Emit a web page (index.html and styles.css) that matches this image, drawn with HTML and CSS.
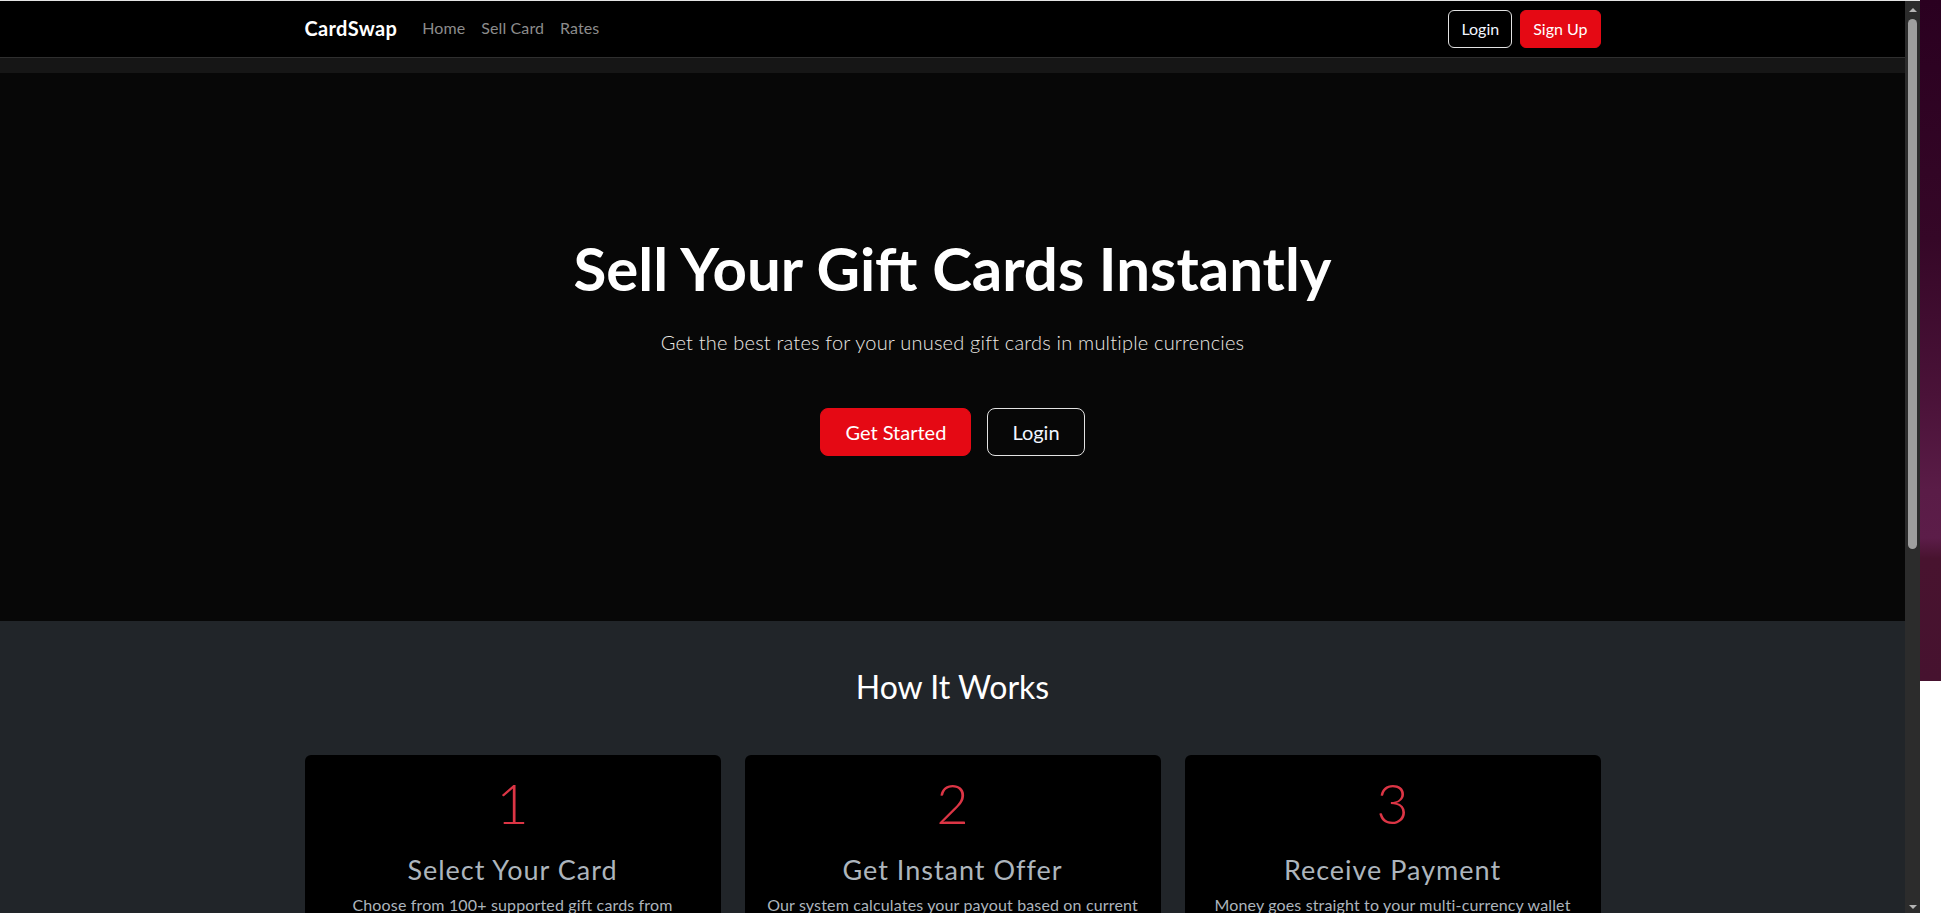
FILE: index.html
```html
<!DOCTYPE html>
<html lang="en">
<head>
<meta charset="utf-8">
<title>CardSwap - Sell Your Gift Cards Instantly</title>
<link rel="stylesheet" href="styles.css">
</head>
<body>
<div class="screen">
  <div class="window">
    <div class="page">
      <nav class="navbar">
        <div class="container nav-inner">
          <a class="brand" href="#">CardSwap</a>
          <ul class="nav-links">
            <li><a href="#">Home</a></li>
            <li><a href="#">Sell Card</a></li>
            <li><a href="#">Rates</a></li>
          </ul>
          <div class="nav-actions">
            <a class="btn btn-outline" href="#">Login</a>
            <a class="btn btn-red" href="#">Sign Up</a>
          </div>
        </div>
      </nav>
      <div class="nav-gap"></div>
      <header class="hero">
        <h1 class="hero-title">Sell Your Gift Cards Instantly</h1>
        <p class="hero-lead">Get the best rates for your unused gift cards in multiple currencies</p>
        <div class="hero-actions">
          <a class="btn btn-lg btn-red" href="#">Get Started</a>
          <a class="btn btn-lg btn-outline" href="#">Login</a>
        </div>
      </header>
      <section class="how">
        <h2 class="how-title">How It Works</h2>
        <div class="container steps">
          <div class="step-card">
            <div class="step-num">1</div>
            <h3 class="step-title">Select Your Card</h3>
            <p class="step-text">Choose from 100+ supported gift cards from international brands and retailers.</p>
          </div>
          <div class="step-card">
            <div class="step-num">2</div>
            <h3 class="step-title">Get Instant Offer</h3>
            <p class="step-text">Our system calculates your payout based on current market rates in your preferred currency.</p>
          </div>
          <div class="step-card">
            <div class="step-num">3</div>
            <h3 class="step-title">Receive Payment</h3>
            <p class="step-text">Money goes straight to your multi-currency wallet immediately after approval.</p>
          </div>
        </div>
      </section>
    </div>
    <div class="scrollbar">
      <span class="sb-up"></span>
      <span class="sb-thumb"></span>
      <span class="sb-down"></span>
    </div>
  </div>
  <div class="desktop"></div>
</div>
</body>
</html>
```
FILE: styles.css
```css
html, body {
  margin: 0;
  padding: 0;
  height: 100%;
  overflow: hidden;
  background: #ffffff;
}

body {
  font-family: Lato, "Liberation Sans", sans-serif;
  -webkit-font-smoothing: antialiased;
}

a {
  text-decoration: none;
}

.screen {
  display: flex;
  width: 1941px;
  height: 913px;
}

.window {
  display: flex;
  width: 1920px;
  height: 913px;
  border-top: 1px solid #e4e4e4;
  box-sizing: border-box;
}

.page {
  width: 1905px;
  height: 912px;
  overflow: hidden;
  background: #212529;
}

.container {
  width: 1296px;
  margin: 0 auto;
}

/* navbar */
.navbar {
  height: 56px;
  background: #000;
  border-bottom: 1px solid #2f2f2f;
}

.nav-inner {
  display: flex;
  align-items: center;
  height: 100%;
}

.brand {
  color: #fff;
  font-size: 20px;
  font-weight: 700;
  letter-spacing: 0.35px;
  margin-right: 17px;
  margin-bottom: 3px;
}

.nav-links {
  display: flex;
  list-style: none;
  margin: 0 0 3px;
  padding: 0;
}

.nav-links a {
  display: block;
  padding: 0 8px;
  color: #8c8c8c;
  font-size: 16px;
  letter-spacing: 0.1px;
}

.nav-actions {
  margin-left: auto;
  display: flex;
  gap: 8px;
}

.btn {
  display: inline-block;
  padding: 6px 12px;
  font-size: 16px;
  line-height: 24px;
  border: 1px solid transparent;
  border-radius: 6px;
  color: #fff;
}

.btn-outline {
  border-color: #e2e2e2;
  color: #f2f6ff;
}

.btn-red {
  background: #e50914;
  border-color: #e50914;
  color: #fff;
}

.btn-lg {
  padding: 8px 24px;
  font-size: 20px;
  line-height: 30px;
  border-radius: 8px;
}

.nav-gap {
  height: 15px;
  background: #161616;
}

/* hero */
.hero {
  height: 548px;
  box-sizing: border-box;
  padding-top: 159px;
  background: #070707;
  text-align: center;
}

.hero-title {
  margin: 0 0 23px;
  font-size: 60px;
  font-weight: 700;
  line-height: 1.2;
  color: #fff;
}

.hero-lead {
  margin: 0 0 51px;
  font-size: 20px;
  font-weight: 300;
  letter-spacing: 0.2px;
  line-height: 30px;
  color: #ebe8e4;
}

.hero-actions {
  display: flex;
  justify-content: center;
  gap: 16px;
}

/* how it works */
.how {
  padding-top: 47px;
}

.how-title {
  margin: 0 0 49px;
  text-align: center;
  font-size: 32px;
  font-weight: 400;
  line-height: 1.2;
  color: #fff;
}

.steps {
  display: grid;
  grid-template-columns: repeat(3, 1fr);
  gap: 24px;
}

.step-card {
  background: #000;
  border-radius: 6px;
  padding: 14px 16px 20px;
  text-align: center;
}

.step-num {
  font-size: 56px;
  font-weight: 300;
  line-height: 1.2;
  color: #dc3545;
  margin-bottom: 17px;
}

.step-title {
  margin: 0 0 7px;
  font-size: 27px;
  font-weight: 400;
  letter-spacing: 1px;
  line-height: 1.2;
  color: #adb5bd;
}

.step-text {
  margin: 0;
  font-size: 16px;
  letter-spacing: 0.15px;
  line-height: 1.5;
  color: #adb5bd;
}

/* fake window scrollbar */
.scrollbar {
  width: 15px;
  background: #2c2c2c;
  display: flex;
  flex-direction: column;
  align-items: center;
}

.sb-up {
  margin-top: 7px;
  width: 0;
  height: 0;
  border-left: 4px solid transparent;
  border-right: 4px solid transparent;
  border-bottom: 4px solid #b4b4b4;
}

.sb-thumb {
  margin-top: 7px;
  width: 9px;
  height: 530px;
  border-radius: 5px;
  background: #9e9e9e;
}

.sb-down {
  margin-top: auto;
  margin-bottom: 4px;
  width: 0;
  height: 0;
  border-left: 4px solid transparent;
  border-right: 4px solid transparent;
  border-top: 4px solid #b4b4b4;
}

/* desktop background peeking out */
.desktop {
  width: 21px;
  height: 681px;
  background: linear-gradient(180deg, #2a0020 0%, #350727 35%, #4a1238 58%, #5a1c47 72%, #5c1d49 79%, #48132f 82%, #46122f 100%);
}
```
